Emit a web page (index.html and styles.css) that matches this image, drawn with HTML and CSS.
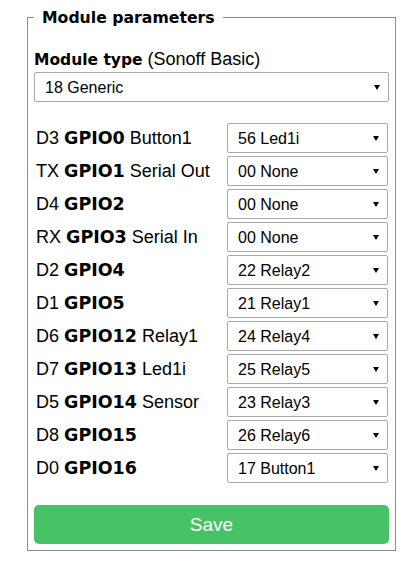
FILE: index.html
```html
<!DOCTYPE html>
<html>
<head>
<meta charset="utf-8">
<link rel="stylesheet" href="styles.css">
</head>
<body>
<div class="page">
  <fieldset class="params">
    <legend class="legend">Module parameters</legend>
    <div class="module-label"><b class="mt">Module type</b> (Sonoff Basic)</div>
    <div class="sel"><select class="select"><option>18 Generic</option></select></div>
    <div class="gpio">
      <div class="row"><span class="lbl">D3 <b>GPIO0</b> Button1</span><div class="sel"><select class="select"><option>56 Led1i</option></select></div></div>
      <div class="row"><span class="lbl">TX <b>GPIO1</b> Serial Out</span><div class="sel"><select class="select"><option>00 None</option></select></div></div>
      <div class="row"><span class="lbl">D4 <b>GPIO2</b></span><div class="sel"><select class="select"><option>00 None</option></select></div></div>
      <div class="row"><span class="lbl">RX <b>GPIO3</b> Serial In</span><div class="sel"><select class="select"><option>00 None</option></select></div></div>
      <div class="row"><span class="lbl">D2 <b>GPIO4</b></span><div class="sel"><select class="select"><option>22 Relay2</option></select></div></div>
      <div class="row"><span class="lbl">D1 <b>GPIO5</b></span><div class="sel"><select class="select"><option>21 Relay1</option></select></div></div>
      <div class="row"><span class="lbl">D6 <b>GPIO12</b> Relay1</span><div class="sel"><select class="select"><option>24 Relay4</option></select></div></div>
      <div class="row"><span class="lbl">D7 <b>GPIO13</b> Led1i</span><div class="sel"><select class="select"><option>25 Relay5</option></select></div></div>
      <div class="row"><span class="lbl">D5 <b>GPIO14</b> Sensor</span><div class="sel"><select class="select"><option>23 Relay3</option></select></div></div>
      <div class="row"><span class="lbl">D8 <b>GPIO15</b></span><div class="sel"><select class="select"><option>26 Relay6</option></select></div></div>
      <div class="row"><span class="lbl">D0 <b>GPIO16</b></span><div class="sel"><select class="select"><option>17 Button1</option></select></div></div>
    </div>
    <button class="save">Save</button>
  </fieldset>
</div>
</body>
</html>
```
FILE: styles.css
```css
html, body {
  margin: 0;
  padding: 0;
  background: #fff;
}
body {
  font-family: "Liberation Sans", Arial, sans-serif;
  font-size: 18px;
  color: #000;
}
b {
  font-family: "DejaVu Sans", Verdana, sans-serif;
  font-weight: bold;
  font-size: 17.5px;
}
b.mt {
  font-size: 15.5px;
}
.page {
  padding: 8px 0 0 27px;
}
.params {
  box-sizing: border-box;
  width: 369px;
  margin: 0;
  border: 1px solid #8c8c8c;
  padding: 0 6px 6px 6px;
  display: flex;
  flex-direction: column;
}
.legend {
  font-family: "DejaVu Sans", Verdana, sans-serif;
  font-weight: bold;
  font-size: 15.7px;
  padding: 0 8px;
  line-height: 19px;
}
.module-label {
  margin-top: 22px;
  line-height: 20px;
  margin-bottom: 2px;
}
.sel {
  position: relative;
}
.sel::after {
  content: "";
  position: absolute;
  right: 9px;
  top: 50%;
  margin-top: -2px;
  border-left: 3px solid transparent;
  border-right: 3px solid transparent;
  border-top: 5px solid #000;
}
.select {
  -webkit-appearance: none;
  appearance: none;
  display: block;
  box-sizing: border-box;
  width: 100%;
  height: 30px;
  margin: 0;
  padding: 0 10px;
  border: 1px solid #a9a9a9;
  border-radius: 2px;
  background: #fff;
  color: #000;
  font-family: "Liberation Sans", Arial, sans-serif;
  font-size: 16px;
}
.gpio {
  margin-top: 21px;
  display: flex;
  flex-direction: column;
  gap: 3px;
}
.row {
  display: grid;
  grid-template-columns: 193px 161px;
  align-items: center;
}
.lbl {
  padding-left: 2px;
  white-space: nowrap;
  line-height: 20px;
}
.save {
  margin-top: 22px;
  height: 39px;
  width: 100%;
  border: 0;
  border-radius: 5px;
  background: #47c266;
  color: #fff;
  font-family: "Liberation Sans", Arial, sans-serif;
  font-size: 19px;
  line-height: 39px;
  padding: 0;
}
```
